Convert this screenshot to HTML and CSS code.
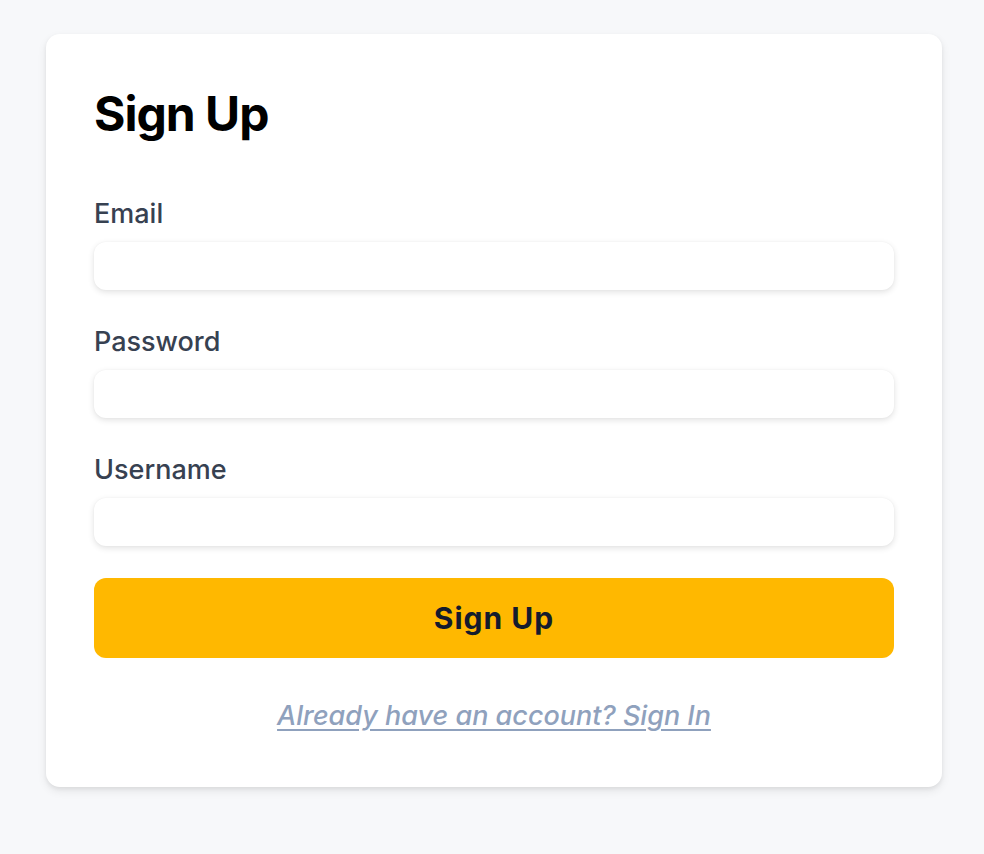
FILE: index.html
```html
<!DOCTYPE html>
<html lang="en">
<head>
<meta charset="utf-8">
<title>Sign Up</title>
<link rel="stylesheet" href="styles.css">
</head>
<body>
<main class="page">
  <form class="card">
    <h1 class="title">Sign Up</h1>
    <div class="field">
      <label class="label" for="email">Email</label>
      <input class="input" id="email" type="email">
    </div>
    <div class="field">
      <label class="label" for="password">Password</label>
      <input class="input" id="password" type="password">
    </div>
    <div class="field">
      <label class="label" for="username">Username</label>
      <input class="input" id="username" type="text">
    </div>
    <button class="button" type="button">Sign Up</button>
    <p class="footer"><a class="link" href="#">Already have an account? Sign In</a></p>
  </form>
</main>
</body>
</html>
```
FILE: styles.css
```css
* { box-sizing: border-box; }
html, body { margin: 0; padding: 0; }
body {
  background: #f7f8fa;
  font-family: Inter, "Noto Sans", sans-serif;
  min-height: 854px;
}
.page {
  padding: 34px 42px 0 46px;
}
.card {
  width: 896px;
  background: #ffffff;
  border-radius: 14px;
  padding: 48px;
  box-shadow: 0 4px 10px rgba(0, 0, 0, 0.08), 0 2px 4px rgba(0, 0, 0, 0.06);
  display: flex;
  flex-direction: column;
}
.title {
  margin: 0 0 48px;
  font-size: 48px;
  line-height: 64px;
  font-weight: 700;
  color: #000000;
  letter-spacing: -1px;
}
.field {
  display: flex;
  flex-direction: column;
  margin-bottom: 32px;
}
.label {
  font-size: 27px;
  line-height: 40px;
  font-weight: 500;
  color: #374151;
  margin-bottom: 8px;
}
.input {
  height: 48px;
  border: none;
  border-radius: 12px;
  background: #ffffff;
  box-shadow: 0 2px 6px rgba(0, 0, 0, 0.12), 0 0 2px rgba(0, 0, 0, 0.04);
  outline: none;
  font: inherit;
}
.button {
  height: 80px;
  border: none;
  border-radius: 12px;
  background: #ffb800;
  color: #141b2d;
  font-family: inherit;
  font-size: 30px;
  font-weight: 700;
  letter-spacing: 1px;
  cursor: pointer;
}
.footer {
  margin: 38px 0 0;
  text-align: center;
  line-height: 40px;
}
.link {
  font-size: 27px;
  font-style: italic;
  font-weight: 500;
  color: #8fa1bd;
  text-decoration: underline;
  text-underline-offset: 4px;
}
```
